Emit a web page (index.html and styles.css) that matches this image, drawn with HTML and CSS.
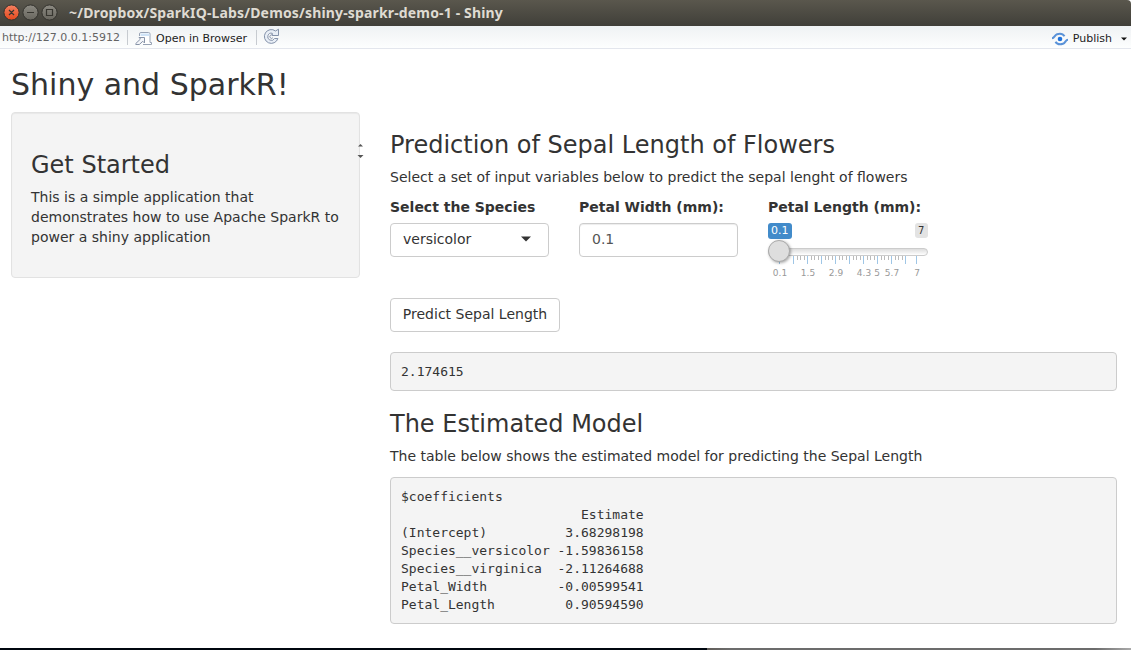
FILE: index.html
```html
<!DOCTYPE html>
<html lang="en">
<head>
<meta charset="utf-8">
<title>Shiny and SparkR!</title>
<link rel="stylesheet" href="styles.css">
</head>
<body>
<header class="titlebar">
  <svg class="window-buttons" width="58" height="26" viewBox="0 0 58 26">
    <defs>
      <linearGradient id="close" x1="0" y1="0" x2="0" y2="1"><stop offset="0" stop-color="#f58060"/><stop offset="1" stop-color="#e3491d"/></linearGradient>
      <linearGradient id="plain" x1="0" y1="0" x2="0" y2="1"><stop offset="0" stop-color="#8c8a82"/><stop offset="1" stop-color="#68665e"/></linearGradient>
    </defs>
    <g stroke="#34332e">
      <circle cx="11.5" cy="12.5" r="7.6" fill="url(#close)"/>
      <circle cx="30.5" cy="12.5" r="7.6" fill="url(#plain)"/>
      <circle cx="49.5" cy="12.5" r="7.6" fill="url(#plain)"/>
    </g>
    <g fill="none" stroke="#373630" stroke-width="1.2">
      <path d="M9 10l5 5M14 10l-5 5M27 12.5h7"/>
      <path d="M46.5 9.5h6v6h-6z"/>
    </g>
  </svg>
  <span class="window-title">~/Dropbox/SparkIQ-Labs/Demos/shiny-sparkr-demo-1 - Shiny</span>
</header>
<nav class="toolbar">
  <span class="address">http://127.0.0.1:5912</span>
  <span class="divider"></span>
  <svg class="open-icon" width="18" height="14" viewBox="0 0 18 14">
    <path d="M4.500 4V2Q4.500 .5 6 .5H13.500Q15 .5 15 2V10.500H16.500V12.500H8" fill="#fff" stroke="#98a3b5"/>
    <path d="M5.500 1.500H14.500V4H5.500z" fill="#cfe3f7"/>
    <path d="M4 5.500H9.500V11L7.800 9.300L4.300 12.500H.8V11.500L5.500 7z" fill="#f4f6fa" stroke="#8793a8"/>
  </svg>
  <span class="open-label">Open in Browser</span>
  <span class="divider divider-second"></span>
  <svg class="reload-icon" width="17" height="17" viewBox="0 0 17 17">
    <path d="M12.500 3L15.500 1.200V7.500H9.300V5.300A3.600 3.600 0 1 0 11.500 10.500H14.900A6.900 6.900 0 1 1 12.500 3Z" fill="#e8eef6" stroke="#8492aa"/>
    <path d="M9.800 7.500A1.700 1.700 0 1 0 9.800 9.800" fill="none" stroke="#8492aa"/>
  </svg>
  <div class="publish">
    <svg width="18" height="14" viewBox="0 0 18 14">
      <g fill="none" stroke="#5a92d8" stroke-width="2">
        <path d="M1 6.300C3.500 6.300 3.500 3 6 2.200C9 1.200 12 1.800 13.500 4.300"/>
        <path d="M17 7.700C14.500 7.700 14.500 11 12 11.800C9 12.800 6 12.200 4.500 9.700"/>
      </g>
      <circle cx="9" cy="7" r="2.300" fill="#1f72dc"/>
    </svg>
    <span>Publish</span>
    <svg class="publish-caret" width="6" height="4" viewBox="0 0 6 4"><path d="M0 .5H6L3 3.500z" fill="#111"/></svg>
  </div>
</nav>
<main class="page">
  <h1>Shiny and SparkR!</h1>
  <div class="columns">
    <aside class="well">
      <h2>Get Started</h2>
      <p>This is a simple application that demonstrates how to use Apache SparkR to power a shiny application</p>
      <svg class="resize-pointer" width="7" height="15" viewBox="0 0 7 15"><path d="M1 2.500H6L3.500 0z" fill="#555"/><path d="M.5 11H6.500L3.500 14z" fill="#555"/></svg>
    </aside>
    <section class="content">
      <h2>Prediction of Sepal Length of Flowers</h2>
      <p>Select a set of input variables below to predict the sepal lenght of flowers</p>
      <div class="inputs">
        <div class="field">
          <label>Select the Species</label>
          <div class="control select">versicolor<svg width="10" height="6" viewBox="0 0 10 6"><path d="M0 .5H10L5 5.500z" fill="#333"/></svg></div>
        </div>
        <div class="field">
          <label>Petal Width (mm):</label>
          <div class="control number">0.1</div>
        </div>
        <div class="field">
          <label>Petal Length (mm):</label>
          <div class="slider">
            <span class="badge badge-value">0.1</span>
            <span class="badge badge-max">7</span>
            <div class="track"></div>
            <svg class="ticks" width="160" height="9" viewBox="0 0 160 9">
              <path d="M29.500 0V4M32.500 0V4M36.500 0V4M43.500 0V4M46.500 0V4M50.500 0V4M57.500 0V4M60.500 0V4M64.500 0V4M71.500 0V4M74.500 0V4M78.500 0V4M85.500 0V4M88.500 0V4M92.500 0V4M99.500 0V4M102.500 0V4M106.500 0V4M113.500 0V4M116.500 0V4M120.500 0V4M127.500 0V4M130.500 0V4M134.500 0V4" stroke="#bbb"/>
              <path d="M11.500 0V8M25.500 0V8M39.500 0V8M53.500 0V8M67.500 0V8M81.500 0V8M95.500 0V8M109.500 0V8M123.500 0V8M137.500 0V8M148.500 0V8" stroke="#9fc6e6"/>
            </svg>
            <div class="handle"></div>
            <div class="scale">
              <span style="left:12px">0.1</span><span style="left:40px">1.5</span><span style="left:68px">2.9</span><span style="left:96px">4.3</span><span style="left:109px">5</span><span style="left:124px">5.7</span><span style="left:149px">7</span>
            </div>
          </div>
        </div>
      </div>
      <button class="predict">Predict Sepal Length</button>
      <pre class="result">2.174615</pre>
      <h2 class="model-heading">The Estimated Model</h2>
      <p>The table below shows the estimated model for predicting the Sepal Length</p>
      <pre class="model">$coefficients
                       Estimate
(Intercept)          3.68298198
Species__versicolor -1.59836158
Species__virginica  -2.11264688
Petal_Width         -0.00599541
Petal_Length         0.90594590</pre>
    </section>
  </div>
</main>
<footer class="desktop-edge"></footer>
</body>
</html>
```
FILE: styles.css
```css
* { box-sizing: border-box; }
body {
  margin: 0;
  height: 650px;
  display: flex;
  flex-direction: column;
  overflow: hidden;
  background: #fff;
  color: #333;
  font: 14px/20px "DejaVu Sans", sans-serif;
}
.titlebar {
  flex: none;
  height: 26px;
  display: flex;
  align-items: center;
  background: linear-gradient(#5a574d, #403f39);
  border-radius: 0 4px 0 0;
}
.window-buttons { margin-right: 11px; }
.window-title {
  color: #dfdbd2;
  font: bold 14px/26px "Noto Sans", sans-serif;
  letter-spacing: .155px;
  white-space: nowrap;
}
.toolbar {
  flex: none;
  height: 23px;
  display: flex;
  align-items: center;
  background: linear-gradient(#eff2f4, #fdfefe);
  border-bottom: 1px solid #e3e6ed;
  font-size: 11px;
  color: #222;
}
.address { width: 125px; padding: 2px 0 0 2px; color: #646464; }
.divider { width: 1px; height: 15px; margin-left: 2px; background: #c7cbd0; }
.open-icon { margin: 3px 3px 0 7px; }
.open-label { width: 100px; margin-top: 4px; white-space: nowrap; }
.divider-second { margin-left: 0; }
.reload-icon { margin-left: 6px; margin-top: -2px; }
.publish { margin: 3px 4px 0 auto; display: flex; align-items: center; gap: 4px; }
.publish-caret { margin-left: 5px; }
.page { flex: 1; padding: 19px 14px 0 11px; }
h1, h2, p, pre { margin: 0; }
h1 { font-size: 30px; line-height: 33px; font-weight: 400; }
h2 { font-size: 24px; line-height: 26px; font-weight: 400; }
.columns { display: flex; align-items: flex-start; gap: 30px; margin-top: 11px; }
.well {
  position: relative;
  flex: none;
  width: 349px;
  height: 166px;
  padding: 39px 19px;
  background: #f4f4f4;
  border: 1px solid #e2e2e2;
  border-radius: 4px;
  box-shadow: inset 0 1px 1px rgba(0, 0, 0, .05);
}
.well p, .content p { margin-top: 9px; }
.resize-pointer { position: absolute; right: -5px; top: 31px; }
.content { flex: 1; padding-top: 20px; }
.inputs { display: flex; gap: 30px; margin-top: 10px; height: 101px; }
.field { width: 159px; }
.field label { display: block; height: 26px; font-weight: 700; white-space: nowrap; }
.control {
  height: 34px;
  padding: 0 12px;
  display: flex;
  align-items: center;
  padding-bottom: 2px;
  border: 1px solid #ccc;
  border-radius: 4px;
}
.select { justify-content: space-between; padding-right: 17px; }
.number { color: #555; box-shadow: inset 0 1px 1px rgba(0, 0, 0, .075); }
.slider { position: relative; width: 160px; height: 60px; }
.badge { position: absolute; top: 0; font-size: 11px; line-height: 16px; padding: 0 3px; border-radius: 3px; }
.badge-value { left: 0; background: #428bca; color: #fff; }
.badge-max { right: 0; width: 13px; height: 15px; background: #e3e3e3; font-size: 10px; line-height: 15px; }
.track {
  position: absolute;
  top: 25px;
  left: 0;
  width: 160px;
  height: 8px;
  background: linear-gradient(#ddd, #fff);
  border: 1px solid #ccc;
  border-radius: 8px;
}
.ticks { position: absolute; left: 0; top: 33px; }
.handle {
  position: absolute;
  top: 17px;
  left: 0;
  width: 22px;
  height: 22px;
  border: 1px solid #aaa;
  border-radius: 50%;
  background: #dedede;
  box-shadow: 1px 1px 3px rgba(0, 0, 0, .35);
}
.scale span {
  position: absolute;
  top: 43px;
  transform: translateX(-50%);
  font-size: 9px;
  line-height: 14px;
  color: #999;
}
.predict {
  display: block;
  width: 170px;
  height: 34px;
  padding: 0 0 2px;
  border: 1px solid #ccc;
  border-radius: 4px;
  background: #fff;
  color: #333;
  font: 14px/20px "DejaVu Sans", sans-serif;
}
pre {
  padding: 10px;
  border: 1px solid #ccc;
  border-radius: 4px;
  background: #f4f4f4;
  font: 13px/18px "DejaVu Sans Mono", monospace;
}
.result { height: 39px; margin: 20px 0; }
.model { height: 147px; margin-top: 11px; }
.desktop-edge {
  flex: none;
  height: 2px;
  background: linear-gradient(90deg, #00060f 707px, #625e5a 707px, #6c6c6c 730px, #6c6c6c 1095px, #aaa 1131px);
}
```
